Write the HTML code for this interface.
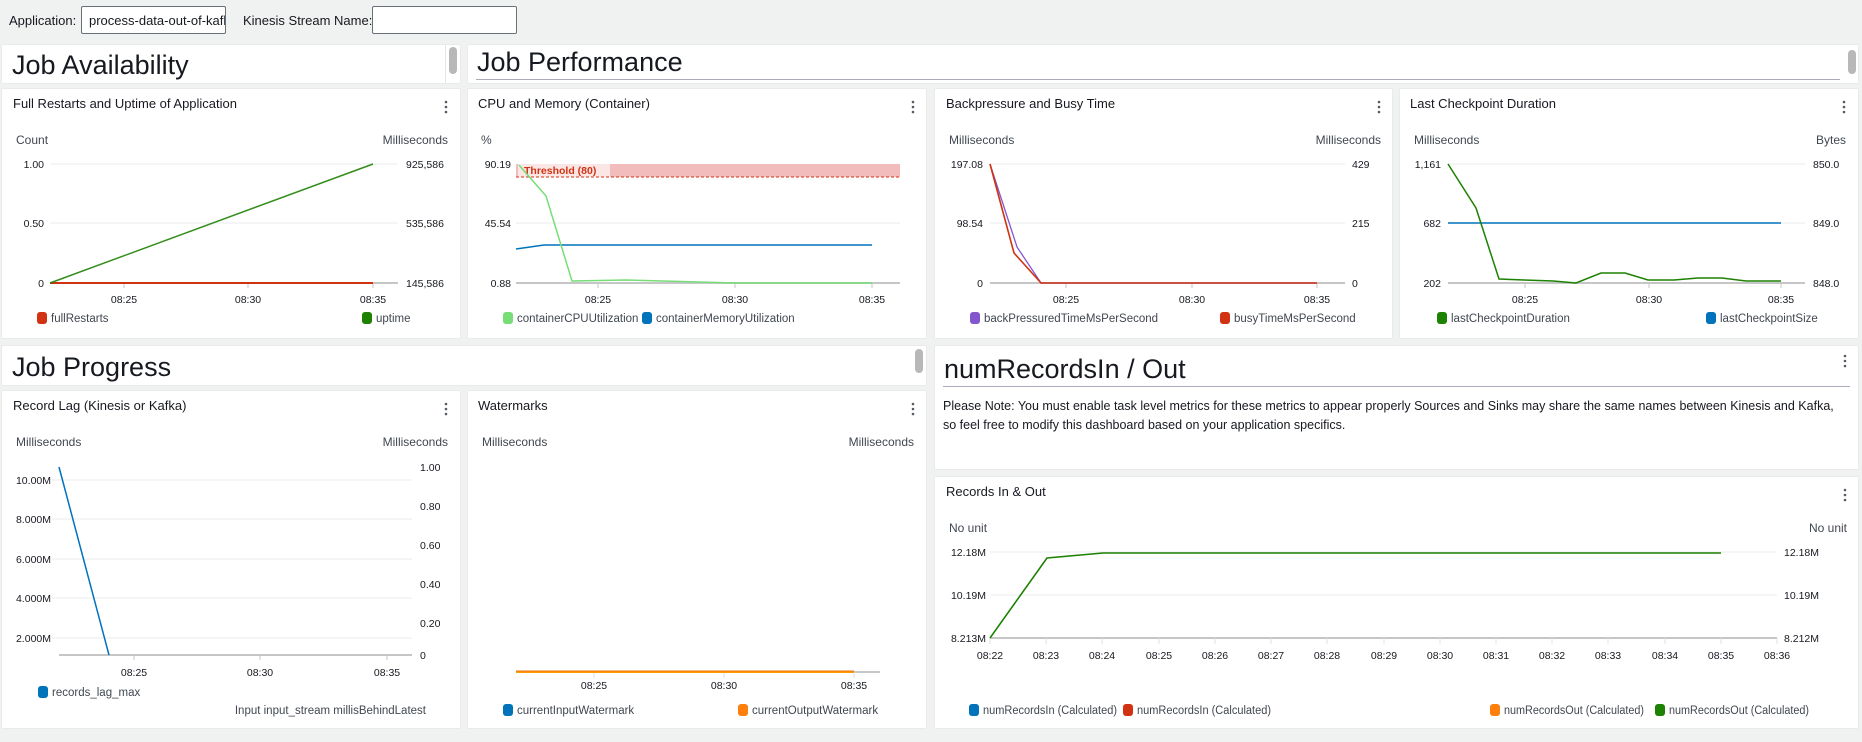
<!DOCTYPE html>
<html><head><meta charset="utf-8"><style>
*{margin:0;padding:0;box-sizing:border-box}
body{width:1862px;height:742px;background:#f0f1f1;font-family:"Liberation Sans",Arial,sans-serif;color:#16191f;position:relative;overflow:hidden}
.p{position:absolute;background:#fff;box-shadow:0 0 1px rgba(0,0,0,.15)}
.p svg{position:absolute;left:0;top:0}
svg text{font-family:"Liberation Sans",Arial,sans-serif;fill:#16191f}
.t{font-size:13px}
.a{font-size:12px;fill:#414750}
.k{font-size:10.5px;fill:#16191f}
.l{font-size:11.5px;fill:#414750}
.h{position:absolute;font-size:27px;color:#16191f;font-weight:400}
.inp{position:absolute;top:6px;height:28px;border:1px solid #687078;border-radius:2px;background:#fff;font-size:13px;padding:6px 7px;overflow:hidden;white-space:nowrap}
.lab{position:absolute;top:13px;font-size:13px}
.sb{position:absolute;width:8px;background:#b8b8b8;border-radius:4px}
</style></head><body>
<div class="lab" style="left:9px">Application:</div>
<div class="inp" style="left:81px;width:145px">process-data-out-of-kafka</div>
<div class="lab" style="left:243px">Kinesis Stream Name:</div>
<div class="inp" style="left:372px;width:145px"></div>

<!-- headers -->
<div class="p" style="left:2px;top:45px;width:458px;height:38px"><div class="h" style="left:10px;top:5px">Job Availability</div><div style="position:absolute;left:443px;top:0;width:1px;height:38px;background:#e5e5e5"></div><div class="sb" style="left:447px;top:2px;height:27px"></div></div>
<div class="p" style="left:468px;top:45px;width:1390px;height:38px"><div class="h" style="left:9px;top:2px">Job Performance</div><div style="position:absolute;left:8px;right:18px;top:34px;height:1px;background:#aab"></div><div class="sb" style="left:1380px;top:5px;height:24px"></div></div>
<div class="p" style="left:2px;top:346px;width:924px;height:39px"><div class="h" style="left:10px;top:6px">Job Progress</div><div class="sb" style="left:913px;top:3px;height:24px"></div></div>

<!-- W1 -->
<div class="p" style="left:2px;top:89px;width:458px;height:249px"><svg width="458" height="249">
<text class="t" x="11" y="19">Full Restarts and Uptime of Application</text>
<g fill="#545b64"><circle cx="444" cy="13" r="1.3"/><circle cx="444" cy="18" r="1.3"/><circle cx="444" cy="23" r="1.3"/></g>
<text class="a" x="14" y="55">Count</text><text class="a" x="446" y="55" text-anchor="end">Milliseconds</text>
<g stroke="#e9ebed"><line x1="48" y1="75" x2="396" y2="75"/><line x1="48" y1="134" x2="396" y2="134"/></g>
<line x1="48" y1="194" x2="396" y2="194" stroke="#c6c6c6" stroke-width="2"/>
<g stroke="#c6c6c6"><line x1="122" y1="194" x2="122" y2="199"/><line x1="246" y1="194" x2="246" y2="199"/><line x1="371" y1="194" x2="371" y2="199"/></g>
<g class="k" text-anchor="end"><text x="42" y="79">1.00</text><text x="42" y="138">0.50</text><text x="42" y="198">0</text></g>
<g class="k"><text x="404" y="79">925,586</text><text x="404" y="138">535,586</text><text x="404" y="198">145,586</text></g>
<g class="k" text-anchor="middle"><text x="122" y="214">08:25</text><text x="246" y="214">08:30</text><text x="371" y="214">08:35</text></g>
<line x1="48" y1="194" x2="371" y2="194" stroke="#d13212" stroke-width="2"/>
<line x1="48" y1="194" x2="371" y2="75" stroke="#1d8102" stroke-width="1.5" stroke-opacity=".9"/>
<rect x="35" y="223" width="10" height="12" rx="3" fill="#d13212"/><text class="l" x="49" y="233">fullRestarts</text>
<rect x="360" y="223" width="10" height="12" rx="3" fill="#1d8102"/><text class="l" x="374" y="233">uptime</text>
</svg></div>

<!-- W2 -->
<div class="p" style="left:468px;top:89px;width:458px;height:249px"><svg width="458" height="249">
<text class="t" x="10" y="19">CPU and Memory (Container)</text>
<g fill="#545b64"><circle cx="445" cy="13" r="1.3"/><circle cx="445" cy="18" r="1.3"/><circle cx="445" cy="23" r="1.3"/></g>
<text class="a" x="13" y="55">%</text>
<line x1="48" y1="134" x2="432" y2="134" stroke="#e9ebed"/>
<rect x="48" y="75" width="384" height="13" fill="#f2bcbc"/>
<rect x="50" y="75" width="92" height="13" fill="#fbe6e6"/>
<line x1="48" y1="88" x2="432" y2="88" stroke="#d13212" stroke-dasharray="3,2"/>
<text x="56" y="85" style="font-size:10.5px;font-weight:bold;fill:#d13212">Threshold (80)</text>
<line x1="48" y1="194" x2="432" y2="194" stroke="#c6c6c6" stroke-width="2"/>
<g stroke="#c6c6c6"><line x1="130" y1="194" x2="130" y2="199"/><line x1="267" y1="194" x2="267" y2="199"/><line x1="404" y1="194" x2="404" y2="199"/></g>
<g class="k" text-anchor="end"><text x="43" y="79">90.19</text><text x="43" y="138">45.54</text><text x="43" y="198">0.88</text></g>
<g class="k" text-anchor="middle"><text x="130" y="214">08:25</text><text x="267" y="214">08:30</text><text x="404" y="214">08:35</text></g>
<polyline points="48,160 76,156 404,156" fill="none" stroke="#0073bb" stroke-width="1.5"/>
<polyline points="51,76 78,107 104,192 158,191 268,194 404,194" fill="none" stroke="#77dd77" stroke-width="1.5"/>
<rect x="35" y="223" width="10" height="12" rx="3" fill="#77dd77"/><text class="l" x="49" y="233">containerCPUUtilization</text>
<rect x="174" y="223" width="10" height="12" rx="3" fill="#0073bb"/><text class="l" x="188" y="233">containerMemoryUtilization</text>
</svg></div>

<!-- W3 -->
<div class="p" style="left:935px;top:89px;width:457px;height:249px"><svg width="457" height="249">
<text class="t" x="11" y="19">Backpressure and Busy Time</text>
<g fill="#545b64"><circle cx="444" cy="13" r="1.3"/><circle cx="444" cy="18" r="1.3"/><circle cx="444" cy="23" r="1.3"/></g>
<text class="a" x="14" y="55">Milliseconds</text><text class="a" x="446" y="55" text-anchor="end">Milliseconds</text>
<g stroke="#e9ebed"><line x1="55" y1="75" x2="410" y2="75"/><line x1="55" y1="134" x2="410" y2="134"/></g>
<line x1="55" y1="194" x2="410" y2="194" stroke="#c6c6c6" stroke-width="2"/>
<g stroke="#c6c6c6"><line x1="131" y1="194" x2="131" y2="199"/><line x1="257" y1="194" x2="257" y2="199"/><line x1="382" y1="194" x2="382" y2="199"/></g>
<g class="k" text-anchor="end"><text x="48" y="79">197.08</text><text x="48" y="138">98.54</text><text x="48" y="198">0</text></g>
<g class="k"><text x="417" y="79">429</text><text x="417" y="138">215</text><text x="417" y="198">0</text></g>
<g class="k" text-anchor="middle"><text x="131" y="214">08:25</text><text x="257" y="214">08:30</text><text x="382" y="214">08:35</text></g>
<polyline points="55,75 82,158 106,194 382,194" fill="none" stroke="#8456ce" stroke-width="1.3"/>
<polyline points="55,75 79,164 106,194 382,194" fill="none" stroke="#d13212" stroke-width="1.6"/>
<rect x="35" y="223" width="10" height="12" rx="3" fill="#8456ce"/><text class="l" x="49" y="233">backPressuredTimeMsPerSecond</text>
<rect x="285" y="223" width="10" height="12" rx="3" fill="#d13212"/><text class="l" x="299" y="233">busyTimeMsPerSecond</text>
</svg></div>

<!-- W4 -->
<div class="p" style="left:1400px;top:89px;width:458px;height:249px"><svg width="458" height="249">
<text class="t" x="10" y="19">Last Checkpoint Duration</text>
<g fill="#545b64"><circle cx="444" cy="13" r="1.3"/><circle cx="444" cy="18" r="1.3"/><circle cx="444" cy="23" r="1.3"/></g>
<text class="a" x="14" y="55">Milliseconds</text><text class="a" x="446" y="55" text-anchor="end">Bytes</text>
<g stroke="#e9ebed"><line x1="48" y1="75" x2="405" y2="75"/><line x1="48" y1="134" x2="405" y2="134"/></g>
<line x1="48" y1="194" x2="405" y2="194" stroke="#c6c6c6" stroke-width="2"/>
<g stroke="#c6c6c6"><line x1="125" y1="194" x2="125" y2="199"/><line x1="249" y1="194" x2="249" y2="199"/><line x1="381" y1="194" x2="381" y2="199"/></g>
<g class="k" text-anchor="end"><text x="41" y="79">1,161</text><text x="41" y="138">682</text><text x="41" y="198">202</text></g>
<g class="k"><text x="413" y="79">850.0</text><text x="413" y="138">849.0</text><text x="413" y="198">848.0</text></g>
<g class="k" text-anchor="middle"><text x="125" y="214">08:25</text><text x="249" y="214">08:30</text><text x="381" y="214">08:35</text></g>
<line x1="48" y1="134" x2="381" y2="134" stroke="#0073bb" stroke-width="1.5"/>
<polyline points="48,75 76,119 99,190 124,191 153,192 176,194 201,184 225,184 248,191 274,191 298,189 322,189 346,192 381,192" fill="none" stroke="#1d8102" stroke-width="1.5"/>
<rect x="37" y="223" width="10" height="12" rx="3" fill="#1d8102"/><text class="l" x="51" y="233">lastCheckpointDuration</text>
<rect x="306" y="223" width="10" height="12" rx="3" fill="#0073bb"/><text class="l" x="320" y="233">lastCheckpointSize</text>
</svg></div>

<!-- text widget -->
<div class="p" style="left:935px;top:346px;width:923px;height:123px">
<div class="h" style="left:9px;top:8px">numRecordsIn / Out</div>
<div style="position:absolute;left:8px;right:8px;top:40px;height:1px;background:#aab"></div>
<div style="position:absolute;left:8px;top:51px;font-size:12.5px;line-height:19px;width:915px;white-space:nowrap">Please Note: You must enable task level metrics for these metrics to appear properly Sources and Sinks may share the same names between Kinesis and Kafka,<br>so feel free to modify this dashboard based on your application specifics.</div>
<svg width="923" height="40"><g fill="#545b64"><circle cx="910" cy="10" r="1.3"/><circle cx="910" cy="15" r="1.3"/><circle cx="910" cy="20" r="1.3"/></g></svg>
</div>

<!-- Record Lag -->
<div class="p" style="left:2px;top:391px;width:458px;height:337px"><svg width="458" height="337">
<text class="t" x="11" y="19">Record Lag (Kinesis or Kafka)</text>
<g fill="#545b64"><circle cx="444" cy="13" r="1.3"/><circle cx="444" cy="18" r="1.3"/><circle cx="444" cy="23" r="1.3"/></g>
<text class="a" x="14" y="55">Milliseconds</text><text class="a" x="446" y="55" text-anchor="end">Milliseconds</text>
<g stroke="#e9ebed"><line x1="50" y1="89" x2="410" y2="89"/><line x1="50" y1="128" x2="410" y2="128"/><line x1="50" y1="168" x2="410" y2="168"/><line x1="50" y1="207" x2="410" y2="207"/><line x1="50" y1="247" x2="410" y2="247"/></g>
<line x1="57" y1="264" x2="410" y2="264" stroke="#c6c6c6" stroke-width="2"/>
<g stroke="#c6c6c6"><line x1="132" y1="264" x2="132" y2="269"/><line x1="258" y1="264" x2="258" y2="269"/><line x1="385" y1="264" x2="385" y2="269"/></g>
<g class="k" text-anchor="end"><text x="49" y="93">10.00M</text><text x="49" y="132">8.000M</text><text x="49" y="172">6.000M</text><text x="49" y="211">4.000M</text><text x="49" y="251">2.000M</text></g>
<g class="k"><text x="418" y="80">1.00</text><text x="418" y="119">0.80</text><text x="418" y="158">0.60</text><text x="418" y="197">0.40</text><text x="418" y="236">0.20</text><text x="418" y="268">0</text></g>
<g class="k" text-anchor="middle"><text x="132" y="285">08:25</text><text x="258" y="285">08:30</text><text x="385" y="285">08:35</text></g>
<line x1="57" y1="76" x2="107" y2="264" stroke="#0073bb" stroke-width="1.5"/>
<rect x="36" y="295" width="10" height="12" rx="3" fill="#0073bb"/><text class="l" x="50" y="305">records_lag_max</text>
<text class="l" x="424" y="323" text-anchor="end">Input input_stream millisBehindLatest</text>
</svg></div>

<!-- Watermarks -->
<div class="p" style="left:468px;top:391px;width:458px;height:337px"><svg width="458" height="337">
<text class="t" x="10" y="19">Watermarks</text>
<g fill="#545b64"><circle cx="445" cy="13" r="1.3"/><circle cx="445" cy="18" r="1.3"/><circle cx="445" cy="23" r="1.3"/></g>
<text class="a" x="14" y="55">Milliseconds</text><text class="a" x="446" y="55" text-anchor="end">Milliseconds</text>
<line x1="48" y1="281" x2="412" y2="281" stroke="#c6c6c6" stroke-width="2"/>
<g stroke="#e0e0e0"><line x1="126" y1="281" x2="126" y2="287"/><line x1="256" y1="281" x2="256" y2="287"/><line x1="386" y1="281" x2="386" y2="287"/></g>
<line x1="48" y1="281" x2="386" y2="281" stroke="#ff9900" stroke-width="2"/>
<line x1="48" y1="280" x2="386" y2="280" stroke="#ec7211" stroke-width="1"/>
<g class="k" text-anchor="middle"><text x="126" y="298">08:25</text><text x="256" y="298">08:30</text><text x="386" y="298">08:35</text></g>
<rect x="35" y="313" width="10" height="12" rx="3" fill="#0073bb"/><text class="l" x="49" y="323">currentInputWatermark</text>
<rect x="270" y="313" width="10" height="12" rx="3" fill="#ff7f0e"/><text class="l" x="284" y="323">currentOutputWatermark</text>
</svg></div>

<!-- Records In & Out -->
<div class="p" style="left:935px;top:477px;width:923px;height:251px"><svg width="923" height="251">
<text class="t" x="11" y="19">Records In &amp; Out</text>
<g fill="#545b64"><circle cx="910" cy="13" r="1.3"/><circle cx="910" cy="18" r="1.3"/><circle cx="910" cy="23" r="1.3"/></g>
<text class="a" x="14" y="55">No unit</text><text class="a" x="912" y="55" text-anchor="end">No unit</text>
<g stroke="#e9ebed"><line x1="55" y1="75" x2="842" y2="75"/><line x1="55" y1="118" x2="842" y2="118"/></g>
<line x1="55" y1="161" x2="842" y2="161" stroke="#c6c6c6" stroke-width="2"/>
<g stroke="#e0e0e0">
<line x1="55" y1="161" x2="55" y2="167"/><line x1="111" y1="161" x2="111" y2="167"/><line x1="167" y1="161" x2="167" y2="167"/><line x1="224" y1="161" x2="224" y2="167"/><line x1="280" y1="161" x2="280" y2="167"/><line x1="336" y1="161" x2="336" y2="167"/><line x1="392" y1="161" x2="392" y2="167"/><line x1="449" y1="161" x2="449" y2="167"/><line x1="505" y1="161" x2="505" y2="167"/><line x1="561" y1="161" x2="561" y2="167"/><line x1="617" y1="161" x2="617" y2="167"/><line x1="673" y1="161" x2="673" y2="167"/><line x1="730" y1="161" x2="730" y2="167"/><line x1="786" y1="161" x2="786" y2="167"/><line x1="842" y1="161" x2="842" y2="167"/></g>
<g class="k" text-anchor="end"><text x="51" y="79">12.18M</text><text x="51" y="122">10.19M</text><text x="51" y="165">8.213M</text></g>
<g class="k"><text x="849" y="79">12.18M</text><text x="849" y="122">10.19M</text><text x="849" y="165">8.212M</text></g>
<g class="k" text-anchor="middle"><text x="55" y="182">08:22</text><text x="111" y="182">08:23</text><text x="167" y="182">08:24</text><text x="224" y="182">08:25</text><text x="280" y="182">08:26</text><text x="336" y="182">08:27</text><text x="392" y="182">08:28</text><text x="449" y="182">08:29</text><text x="505" y="182">08:30</text><text x="561" y="182">08:31</text><text x="617" y="182">08:32</text><text x="673" y="182">08:33</text><text x="730" y="182">08:34</text><text x="786" y="182">08:35</text><text x="842" y="182">08:36</text></g>
<polyline points="55,161 112,81 168,76 786,76" fill="none" stroke="#1d8102" stroke-width="1.6"/>
<rect x="34" y="227" width="10" height="12" rx="3" fill="#0073bb"/><text class="l" x="48" y="237" textLength="134" lengthAdjust="spacingAndGlyphs">numRecordsIn (Calculated)</text>
<rect x="188" y="227" width="10" height="12" rx="3" fill="#d13212"/><text class="l" x="202" y="237" textLength="134" lengthAdjust="spacingAndGlyphs">numRecordsIn (Calculated)</text>
<rect x="555" y="227" width="10" height="12" rx="3" fill="#ff7f0e"/><text class="l" x="569" y="237" textLength="140" lengthAdjust="spacingAndGlyphs">numRecordsOut (Calculated)</text>
<rect x="720" y="227" width="10" height="12" rx="3" fill="#1d8102"/><text class="l" x="734" y="237" textLength="140" lengthAdjust="spacingAndGlyphs">numRecordsOut (Calculated)</text>
</svg></div>
</body></html>
